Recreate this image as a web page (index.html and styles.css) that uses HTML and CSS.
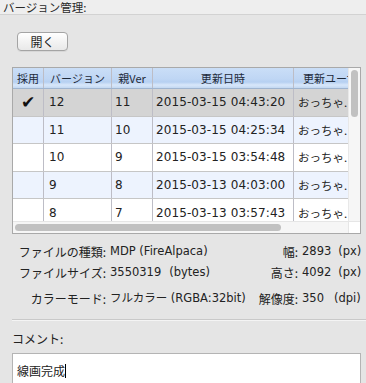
FILE: index.html
```html
<!DOCTYPE html>
<html lang="ja">
<head>
<meta charset="utf-8">
<link rel="stylesheet" href="styles.css">
</head>
<body>
<div class="titlebar">バージョン管理:</div>
<div class="toolbar"><button class="btn">開く</button></div>
<div class="table-box">
  <div class="table-content">
    <div class="row head">
      <div class="c c1 center">採用</div>
      <div class="c c2 center">バージョン</div>
      <div class="c c3 center">親Ver</div>
      <div class="c c4 center">更新日時</div>
      <div class="c c5 center">更新ユーザ</div>
    </div>
    <div class="row sel">
      <div class="c c1 center check">✔</div>
      <div class="c c2">12</div>
      <div class="c c3">11</div>
      <div class="c c4">2015-03-15 04:43:20</div>
      <div class="c c5">おっちゃ.</div>
    </div>
    <div class="row alt">
      <div class="c c1"></div>
      <div class="c c2">11</div>
      <div class="c c3">10</div>
      <div class="c c4">2015-03-15 04:25:34</div>
      <div class="c c5">おっちゃ.</div>
    </div>
    <div class="row">
      <div class="c c1"></div>
      <div class="c c2">10</div>
      <div class="c c3">9</div>
      <div class="c c4">2015-03-15 03:54:48</div>
      <div class="c c5">おっちゃ.</div>
    </div>
    <div class="row alt">
      <div class="c c1"></div>
      <div class="c c2">9</div>
      <div class="c c3">8</div>
      <div class="c c4">2015-03-13 04:03:00</div>
      <div class="c c5">おっちゃ.</div>
    </div>
    <div class="row">
      <div class="c c1"></div>
      <div class="c c2">8</div>
      <div class="c c3">7</div>
      <div class="c c4">2015-03-13 03:57:43</div>
      <div class="c c5">おっちゃ.</div>
    </div>
  </div>
  <div class="vscroll"><div class="vthumb"></div></div>
  <div class="hscroll"><div class="hthumb"></div></div>
  <div class="corner"></div>
</div>
<div class="info">
  <div class="lbl">ファイルの種類:</div>
  <div class="val">MDP (FireAlpaca)</div>
  <div class="lbl">幅:</div>
  <div class="val">2893<span class="unit u-px">(px)</span></div>

  <div class="lbl">ファイルサイズ:</div>
  <div class="val">3550319<span class="unit u-b">(bytes)</span></div>
  <div class="lbl">高さ:</div>
  <div class="val">4092<span class="unit u-px">(px)</span></div>

  <div class="lbl l3">カラーモード:</div>
  <div class="val l3">フルカラー (RGBA:32bit)</div>
  <div class="lbl l3">解像度:</div>
  <div class="val l3">350<span class="unit u-dpi">(dpi)</span></div>
</div>
<div class="comment">
  <div class="comment-label">コメント:</div>
  <div class="comment-input">線画完成<span class="caret"></span></div>
</div>
</body>
</html>
```
FILE: styles.css
```css
html, body {
  margin: 0;
  padding: 0;
}
body {
  width: 366px;
  height: 383px;
  overflow: hidden;
  background: #e5e5e5;
  font-family: "DejaVu Sans", "Noto Sans CJK JP", sans-serif;
  color: #222;
}
.titlebar {
  height: 14px;
  line-height: 14px;
  padding-left: 3px;
  font-size: 11.5px;
  font-family: "Noto Sans CJK JP", sans-serif;
  background: #eeeeee;
  border-bottom: 1px solid #d2d2d2;
  color: #2a2a2a;
}
.toolbar {
  padding: 17px 0 0 17px;
  height: 19px;
}
.btn {
  display: block;
  width: 51px;
  height: 19px;
  margin: 0;
  padding: 0;
  border: 1px solid #a4a4a4;
  border-radius: 4px;
  background: linear-gradient(#ffffff, #f1f1f1 60%, #e9e9e9);
  font-family: "Noto Sans CJK JP", sans-serif;
  font-size: 12px;
  line-height: 17px;
  color: #222;
  box-shadow: 0 1px 0 rgba(0,0,0,0.06);
}
.table-box {
  margin: 16px 0 0 12px;
  width: 347px;
  height: 165px;
  border: 1px solid #a9a9a9;
  background: #fff;
  display: grid;
  grid-template-columns: 1fr 12px;
  grid-template-rows: 1fr 12px;
}
.table-content {
  overflow: hidden;
  grid-row: 1;
  grid-column: 1;
}
.row {
  display: flex;
  width: 420px;
  height: 27.6px;
  border-bottom: 1px solid #c6c6c6;
  box-sizing: border-box;
  font-size: 12px;
  align-items: stretch;
}
.row.head {
  height: 21px;
  font-size: 11px;
  font-family: "Noto Sans CJK JP", sans-serif;
  background: linear-gradient(#cadef7 0%, #bfd6f4 55%, #b6d0f1 70%, #d8e7fa 85%, #c2d8f2 100%);
  border-bottom: 1px solid #9fb4cf;
  color: #1e2a3a;
}
.row.sel { background: #d4d4d4; }
.row.alt { background: #edf3fe; }
.c {
  box-sizing: border-box;
  border-right: 1px solid #bdbdc6;
  display: flex;
  align-items: center;
  padding-left: 4px;
  white-space: nowrap;
  overflow: hidden;
}
.c.center { justify-content: center; padding-left: 0; }
.c1 { width: 31px; }
.c2 { width: 68px; padding-left: 5px; }
.c3 { width: 41px; padding-left: 3px; }
.c4 { width: 141px; padding-left: 3px; letter-spacing: 0.1px; }
.c5 { width: 139px; padding-left: 4px; font-family: "Noto Sans CJK JP", sans-serif; font-size: 11.5px; }
.row.head .c5 { justify-content: flex-start; padding-left: 9px; font-size: 11px; }
.check { font-size: 17px; color: #111; }
.vscroll {
  grid-row: 1;
  grid-column: 2;
  background: #f6f6f6;
  border-left: 1px solid #e8e8e8;
  padding: 2px 2px 0 2px;
}
.vthumb {
  width: 7px;
  height: 47px;
  border-radius: 4px;
  background: #c1c1c1;
}
.hscroll {
  grid-row: 2;
  grid-column: 1;
  background: #f6f6f6;
  border-top: 1px solid #e6e6e6;
  padding: 2px 0 0 2px;
}
.hthumb {
  width: 266px;
  height: 7px;
  border-radius: 4px;
  background: #c1c1c1;
}
.corner {
  grid-row: 2;
  grid-column: 2;
  background: #ffffff;
  border-left: 1px solid #e6e6e6;
  border-top: 1px solid #e6e6e6;
}
.info {
  display: grid;
  grid-template-columns: 94px 136px 48px 64px;
  grid-template-rows: 21px 21px 22px;
  column-gap: 4px;
  row-gap: 0;
  padding: 7px 0 0 12px;
  width: 362px;
  height: 85px;
  box-sizing: border-box;
  overflow: hidden;
  font-size: 11.5px;
  color: #222;
}
.lbl {
  text-align: right;
  white-space: nowrap;
  line-height: 21px;
  font-family: "Noto Sans CJK JP", sans-serif;
  font-size: 12px;
}
.val {
  white-space: nowrap;
  line-height: 21px;
}
.l3 { margin-top: 5px; }
.unit { display: inline-block; }
.u-px { margin-left: 7px; }
.u-b { margin-left: 8px; }
.u-dpi { margin-left: 10px; }
.comment {
  margin-left: 12px;
  border-top: 1px solid #c9c9c9;
  box-shadow: inset 0 1px 0 #f4f4f4;
}
.comment-label {
  height: 33px;
  line-height: 38px;
  font-family: "Noto Sans CJK JP", sans-serif;
  font-size: 12px;
  color: #222;
}
.comment-input {
  width: 349px;
  height: 40px;
  box-sizing: border-box;
  background: #fff;
  border: 1px solid #b4b4b4;
  padding: 8px 4px;
  font-family: "Noto Sans CJK JP", sans-serif;
  font-size: 12px;
  line-height: 18px;
  color: #222;
}
.caret {
  display: inline-block;
  width: 1px;
  height: 14px;
  background: #000;
  vertical-align: -2px;
}
```
